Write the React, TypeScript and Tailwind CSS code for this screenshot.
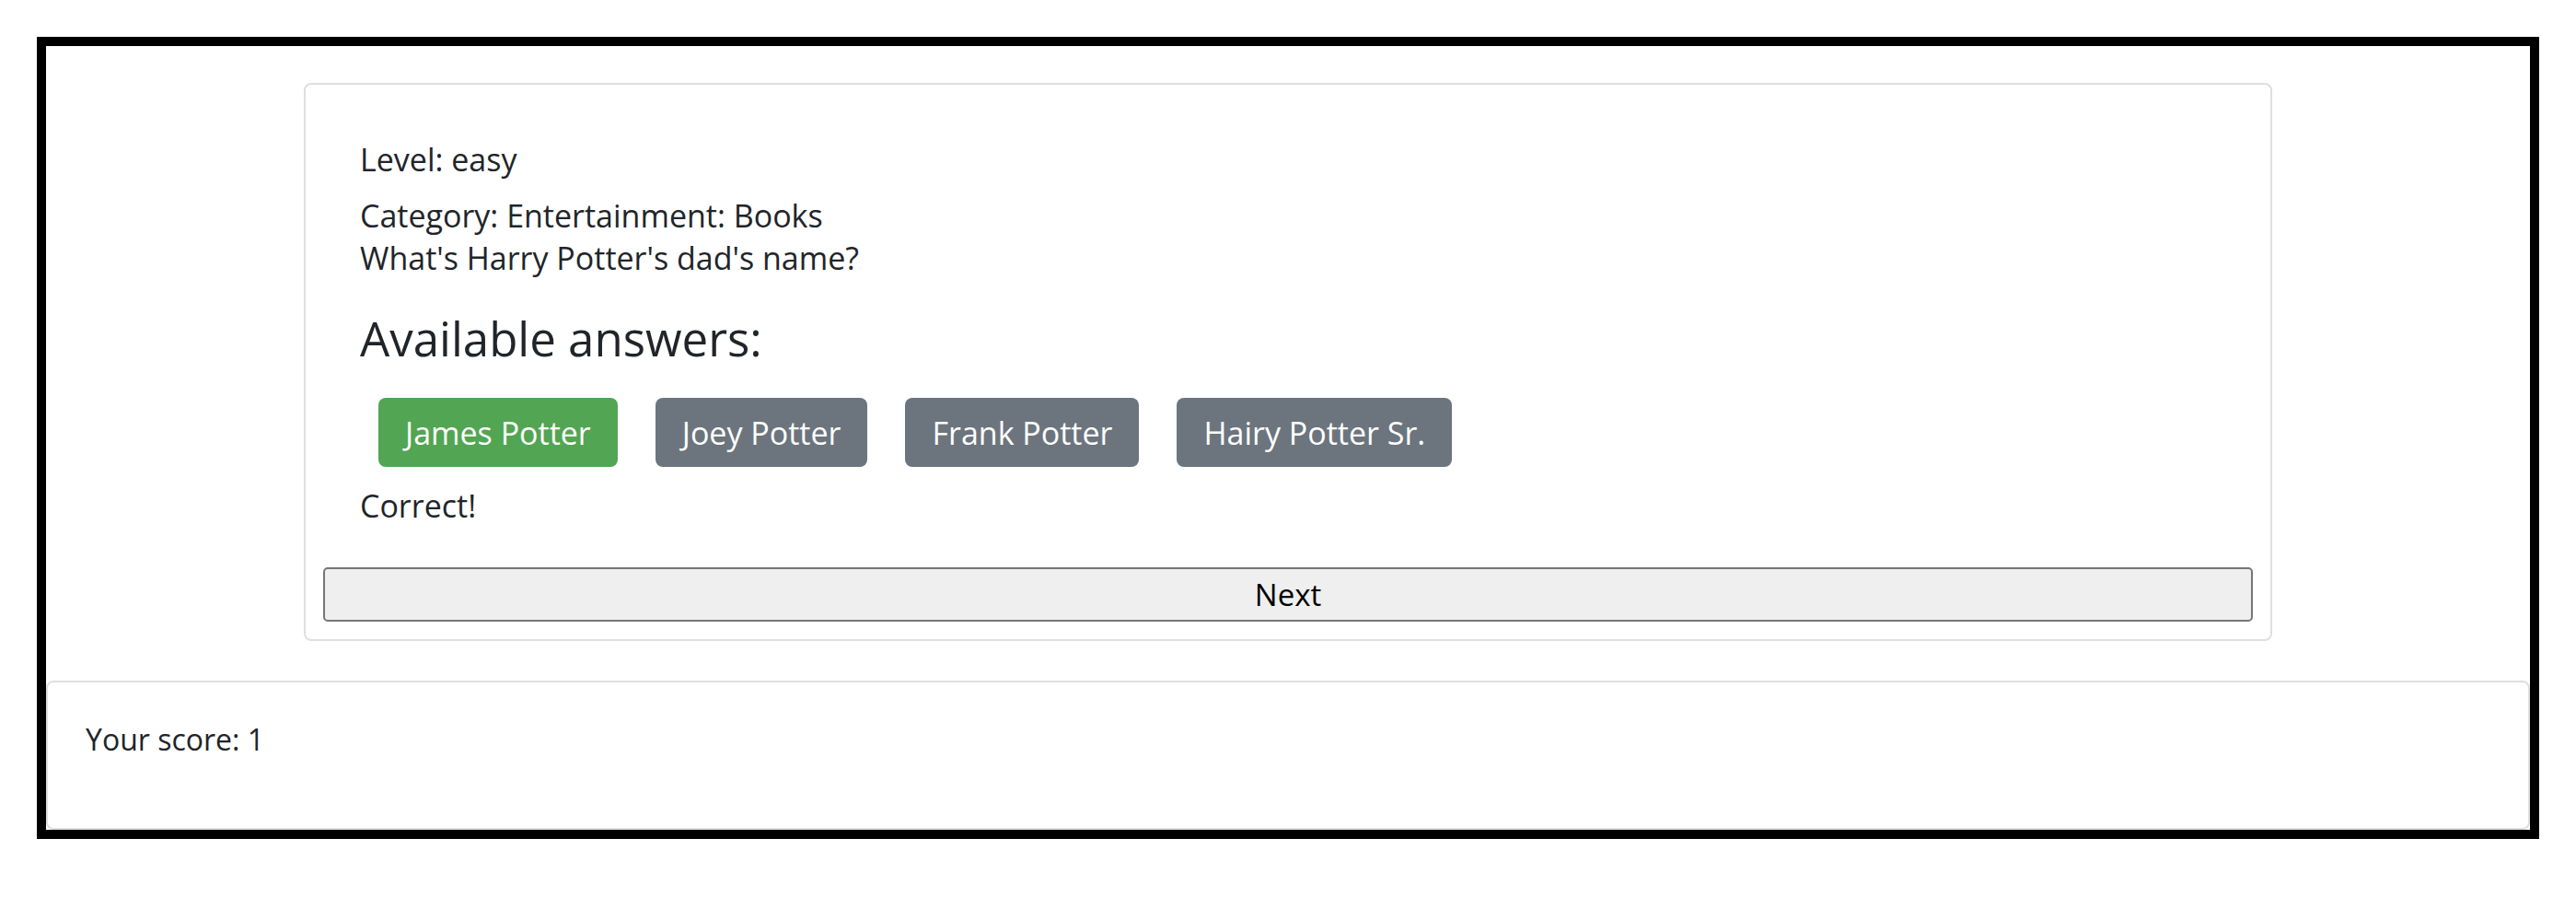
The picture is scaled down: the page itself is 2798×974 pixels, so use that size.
import React, { useState } from 'react';

const answers = ['James Potter', 'Joey Potter', 'Frank Potter', 'Hairy Potter Sr.'];
const correctAnswer = 'James Potter';

const App = () => {
  const [picked] = useState<string>('James Potter');
  const [score] = useState(1);

  return (
    <div
      className="bg-white p-10 text-[34px] leading-[46px] text-[#212529]"
      style={{ fontFamily: '"Open Sans", "Noto Sans", sans-serif' }}
    >
      <div className="flex h-[871px] flex-col border-[10px] border-black">
        <div className="pt-10">
          <div className="mx-auto w-[2138px] rounded-lg border-2 border-[#dfdfdf] px-[19px] pb-[19px] pt-[58px]">
            <div className="px-[40px]">
              <p>Level: easy</p>
              <p className="mt-[15px]">Category: Entertainment: Books</p>
              <p>What&apos;s Harry Potter&apos;s dad&apos;s name?</p>
              <h3 className="mt-[34px] text-[51px] font-medium leading-[60px]">Available answers:</h3>
              <div className="mt-[35px] flex gap-[41px] pl-5">
                {answers.map((answer) => (
                  <button
                    key={answer}
                    className={`flex h-[75px] items-center rounded-lg px-[29px] text-white ${
                      picked && answer === correctAnswer ? 'bg-[#52a552]' : 'bg-[#6c757d]'
                    }`}
                  >
                    {answer}
                  </button>
                ))}
              </div>
              <p className="mt-[19px]">{picked === correctAnswer ? 'Correct!' : 'Wrong!'}</p>
            </div>
            <button className="mt-[44px] flex h-[59px] w-full items-center justify-center rounded-[5px] border-2 border-[#767676] bg-[#efefef] text-[33px] text-black">
              Next
            </button>
          </div>
        </div>
        <div className="mt-[43px] flex-1 rounded-lg border-2 border-[#dfdfdf] px-[41px] pt-[39px]">
          <p className="text-[32px]">Your score: {score}</p>
        </div>
      </div>
    </div>
  );
};

export default App;
